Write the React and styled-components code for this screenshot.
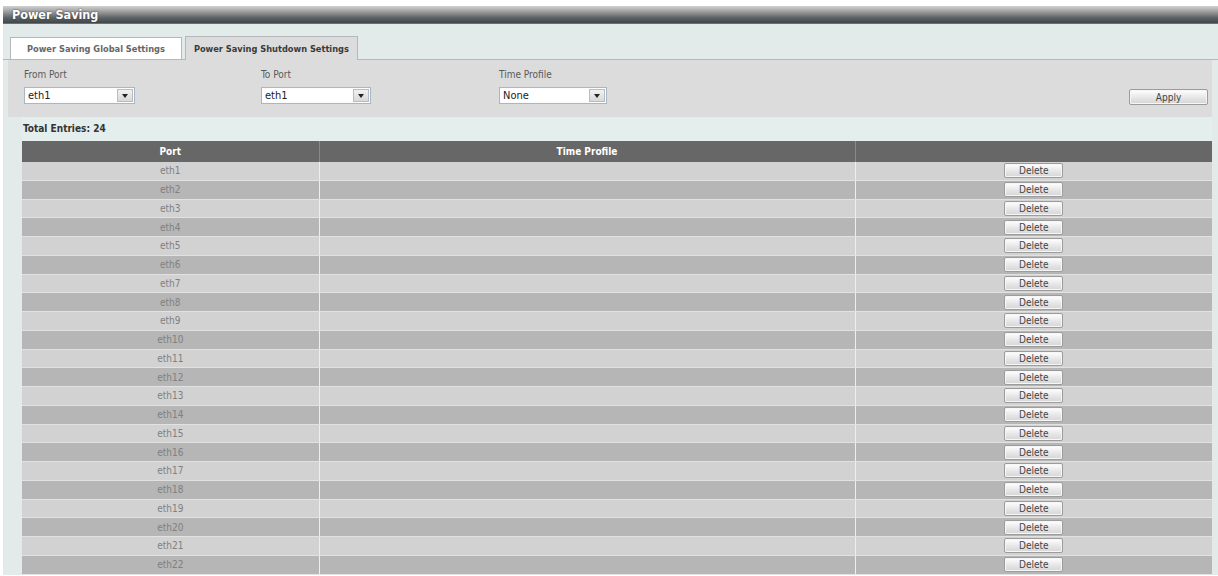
import React from 'react';
import styled, { createGlobalStyle } from 'styled-components';

const GlobalStyle = createGlobalStyle`
  html, body {
    margin: 0;
    padding: 0;
    background: #ffffff;
  }
  body {
    font-family: "DejaVu Sans Condensed", "DejaVu Sans", Tahoma, sans-serif;
    font-size: 10px;
    color: #555;
  }
`;

const Page = styled.div`
  padding: 6px 0 0 3px;
  height: 569px;
  overflow: hidden;
`;

const TitleBar = styled.h1`
  margin: 0;
  height: 18px;
  line-height: 18px;
  padding-left: 9px;
  font-size: 12.5px;
  font-weight: bold;
  color: #fff;
  text-shadow: 0 0 2px #333;
  background: linear-gradient(#d2d2d2 0%, #9a9a9a 35%, #5c6164 70%, #41464a 100%);
  border-bottom: 1px solid #6b7073;
  box-sizing: border-box;
`;

const Panel = styled.div`
  background: #e3eaea;
  height: 560px;
`;

const TabBar = styled.div`
  display: flex;
  align-items: flex-end;
  gap: 3px;
  height: 36px;
  padding-left: 7px;
  box-sizing: border-box;
  border-bottom: 1px solid #b4b8b8;
`;

const Tab = styled.div`
  box-sizing: border-box;
  padding: 0 ${p => (p.$active ? 8 : 16)}px;
  display: flex;
  align-items: center;
  font-weight: bold;
  font-size: 9.2px;
  color: ${p => (p.$active ? '#3a3a3a' : '#666')};
  background: ${p => (p.$active ? '#dcdcdc' : '#ffffff')};
  border: 1px solid #b4b8b8;
  border-bottom: none;
  margin-bottom: ${p => (p.$active ? '-1px' : '0')};
  height: ${p => (p.$active ? '24px' : '22px')};
`;

const FormBox = styled.div`
  margin: 0 6px 0 5px;
  background: #dcdcdc;
  height: 57px;
  box-sizing: border-box;
  padding: 9px 4px 0 16px;
  display: flex;
  align-items: flex-start;
`;

const Field = styled.div`
  width: ${p => p.$width}px;
  display: flex;
  flex-direction: column;
  gap: 6px;
`;

const Label = styled.label`
  font-size: 10px;
  color: #5a5a5a;
  line-height: 12px;
`;

const SelectBox = styled.div`
  width: ${p => p.$width}px;
  height: 17px;
  box-sizing: border-box;
  display: flex;
  background: #fff;
  border: 1px solid #aab6c6;
  box-shadow: inset 0 0 1px #d6dfea;
`;

const SelectValue = styled.span`
  flex: 1;
  padding-left: 3px;
  font-size: 11px;
  line-height: 15px;
  color: #222;
`;

const SelectArrow = styled.span`
  width: 16px;
  margin: 1px;
  background: linear-gradient(#f2f2f2, #d8d8d8);
  border: 1px solid #b8bcc4;
  box-sizing: border-box;
  display: flex;
  align-items: center;
  justify-content: center;
  &::after {
    content: "";
    border-left: 3px solid transparent;
    border-right: 3px solid transparent;
    border-top: 4px solid #222;
  }
`;

const Spacer = styled.div`
  flex: 1;
`;

const Button = styled.button`
  width: ${p => p.$width}px;
  height: ${p => p.$height}px;
  margin-top: ${p => p.$top || 0}px;
  padding: 0;
  font-family: inherit;
  font-size: 10px;
  color: #444;
  background: linear-gradient(#ffffff, #e4e4e4 60%, #d6d6d6);
  border: 1px solid #9c9c9c;
  border-radius: 2px;
  box-shadow: inset 0 0 0 1px #f6f6f6;
  cursor: pointer;
`;

const Entries = styled.div`
  padding: 0 6px 0 19px;
`;

const Caption = styled.div`
  height: 24px;
  line-height: 24px;
  padding-left: 1px;
  font-weight: bold;
  font-size: 10px;
  color: #333;
  background: #e4eeec;
`;

const Table = styled.table`
  width: 1190px;
  border-collapse: collapse;
  table-layout: fixed;
  font-size: 10px;
`;

const HeadCell = styled.th`
  height: 21px;
  padding: 0;
  background: #676767;
  color: #fff;
  font-weight: bold;
  text-align: center;
  border-right: 1px solid #8a8a8a;
  &:last-child {
    border-right: none;
  }
`;

const Row = styled.tr`
  background: ${p => (p.$odd ? '#b6b6b6' : '#d2d2d2')};
`;

const Cell = styled.td`
  height: 17.76px;
  padding: 0;
  text-align: center;
  color: #808080;
  border-bottom: 1px solid #e2e2e2;
  border-right: 1px solid #eeeeee;
  &:last-child {
    border-right: none;
  }
`;

const ports = Array.from({ length: 24 }, (_, i) => `eth${i + 1}`);

export default function App() {
  return (
    <>
      <GlobalStyle />
      <Page>
        <TitleBar>Power Saving</TitleBar>
        <Panel>
          <TabBar>
            <Tab>Power Saving Global Settings</Tab>
            <Tab $active>Power Saving Shutdown Settings</Tab>
          </TabBar>
          <FormBox>
            <Field $width={237}>
              <Label>From Port</Label>
              <SelectBox $width={111}>
                <SelectValue>eth1</SelectValue>
                <SelectArrow />
              </SelectBox>
            </Field>
            <Field $width={238}>
              <Label>To Port</Label>
              <SelectBox $width={110}>
                <SelectValue>eth1</SelectValue>
                <SelectArrow />
              </SelectBox>
            </Field>
            <Field $width={120}>
              <Label>Time Profile</Label>
              <SelectBox $width={108}>
                <SelectValue>None</SelectValue>
                <SelectArrow />
              </SelectBox>
            </Field>
            <Spacer />
            <Button $width={79} $height={16} $top={20}>Apply</Button>
          </FormBox>
          <Entries>
            <Caption>Total Entries: 24</Caption>
            <Table>
              <colgroup>
                <col style={{ width: 297 }} />
                <col style={{ width: 536 }} />
                <col />
              </colgroup>
              <thead>
                <tr>
                  <HeadCell>Port</HeadCell>
                  <HeadCell>Time Profile</HeadCell>
                  <HeadCell />
                </tr>
              </thead>
              <tbody>
                {ports.map((port, i) => (
                  <Row key={port} $odd={i % 2 === 1}>
                    <Cell>{port}</Cell>
                    <Cell />
                    <Cell>
                      <Button $width={59} $height={15}>Delete</Button>
                    </Cell>
                  </Row>
                ))}
              </tbody>
            </Table>
          </Entries>
        </Panel>
      </Page>
    </>
  );
}
